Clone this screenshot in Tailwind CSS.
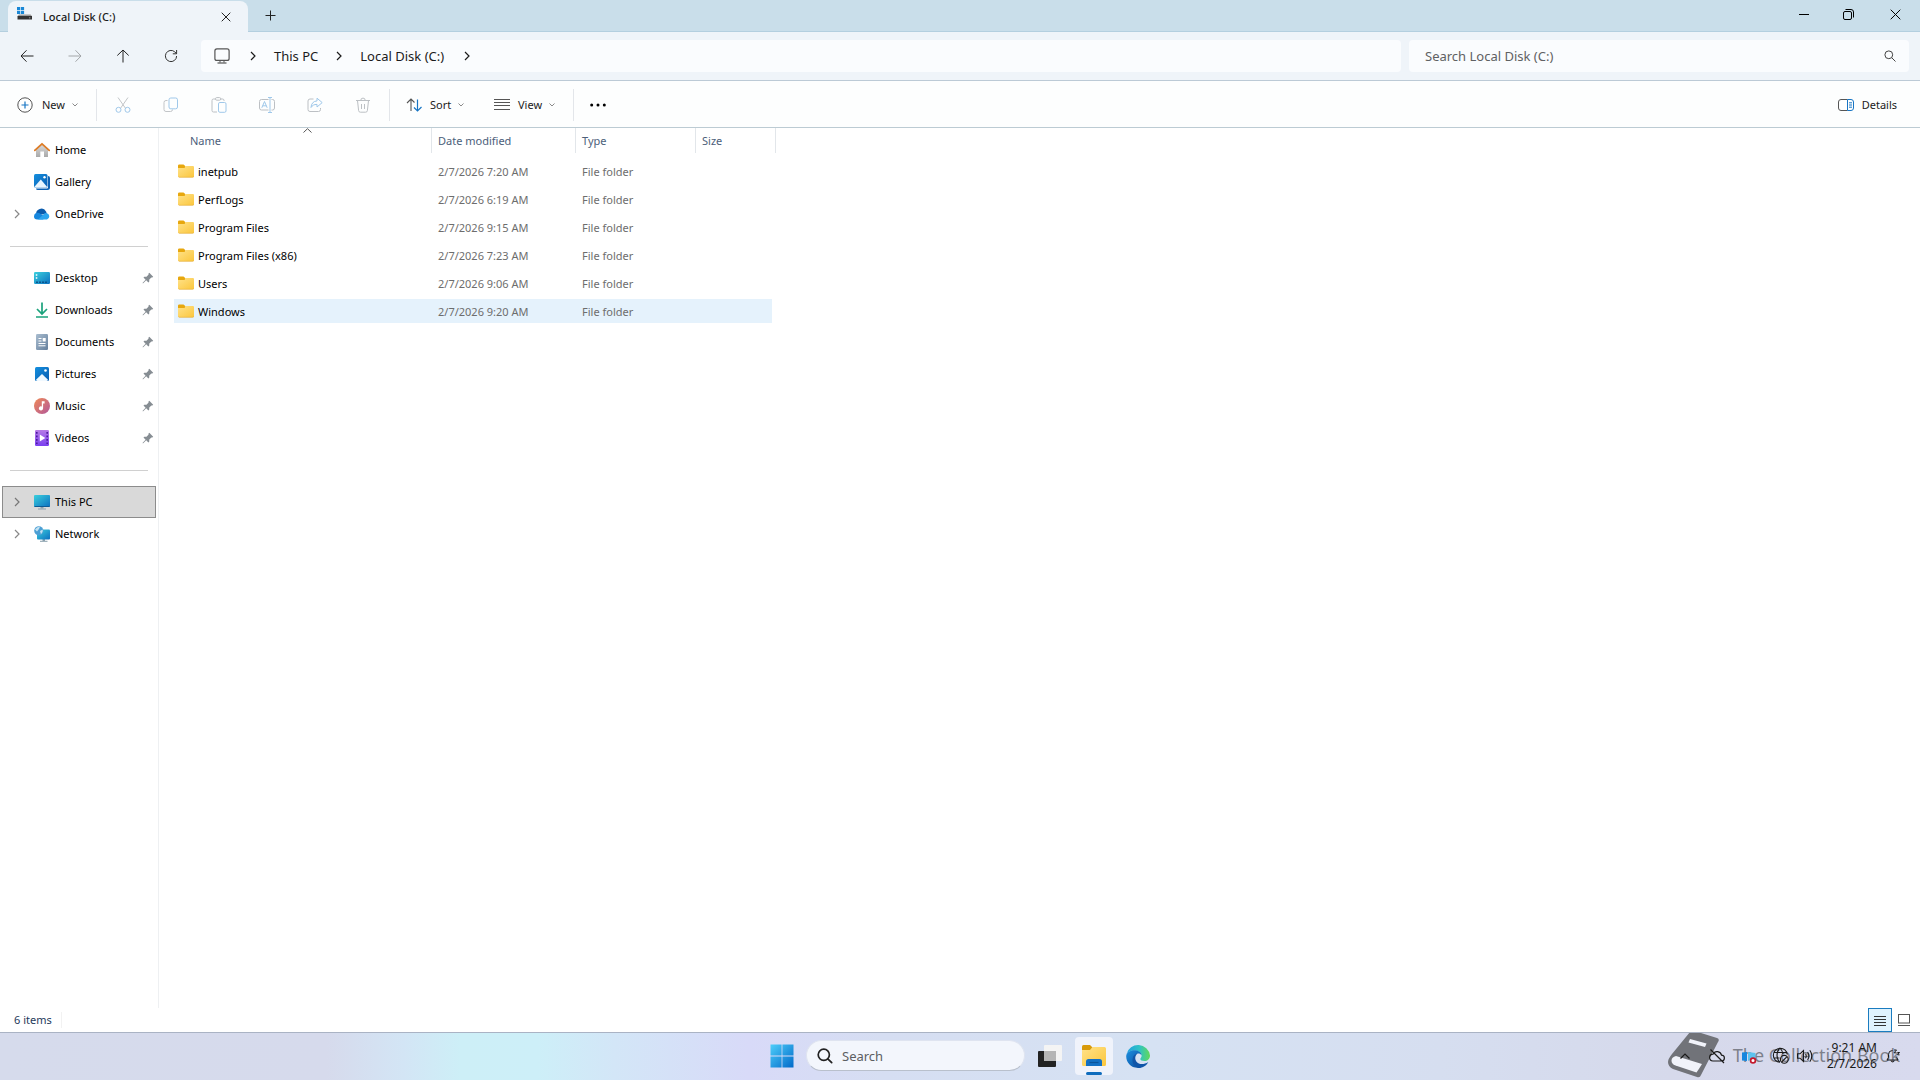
<!DOCTYPE html>
<html lang="en">
<head>
<meta charset="utf-8">
<title>Local Disk (C:)</title>
<script src="https://cdn.jsdelivr.net/npm/@tailwindcss/browser@4"></script>
</head>
<body class="flex h-screen flex-col overflow-hidden bg-white font-['Noto_Sans','Open_Sans',sans-serif] text-[11px] leading-4 text-[#1b1b1b]">

<svg class="absolute size-0" aria-hidden="true">
  <defs>
    <linearGradient id="gFolder" x1="0" y1="0" x2="1" y2="1"><stop offset="0" stop-color="#ffe28a"/><stop offset="1" stop-color="#fbc63c"/></linearGradient>
    <linearGradient id="gTeal" x1="0" y1="0" x2="1" y2="1"><stop offset="0" stop-color="#3bd0dd"/><stop offset="1" stop-color="#0b6fc0"/></linearGradient>
    <linearGradient id="gBlue" x1="0" y1="0" x2="1" y2="1"><stop offset="0" stop-color="#1490df"/><stop offset="1" stop-color="#0a5cb0"/></linearGradient>
    <linearGradient id="gWin" gradientUnits="userSpaceOnUse" x1="0" y1="0" x2="24" y2="24"><stop offset="0" stop-color="#4fd0fb"/><stop offset="1" stop-color="#0067c8"/></linearGradient>
    <linearGradient id="gHome" x1="0" y1="0" x2="0" y2="1"><stop offset="0" stop-color="#dcdcdc"/><stop offset="1" stop-color="#a9a9a9"/></linearGradient>
    <linearGradient id="gDoc" x1="0" y1="0" x2="1" y2="1"><stop offset="0" stop-color="#a9bdd0"/><stop offset="1" stop-color="#657f9c"/></linearGradient>
    <linearGradient id="gMusic" x1="0" y1="0" x2="1" y2="1"><stop offset="0" stop-color="#f08a55"/><stop offset="1" stop-color="#b2579b"/></linearGradient>
    <linearGradient id="gVideo" x1="0" y1="0" x2="0" y2="1"><stop offset="0" stop-color="#b77be6"/><stop offset="1" stop-color="#7a3ff0"/></linearGradient>
    <linearGradient id="gEdgeTop" x1="0" y1="0" x2="1" y2="0"><stop offset="0" stop-color="#1f9fe0"/><stop offset=".55" stop-color="#2fc3c4"/><stop offset="1" stop-color="#63d957"/></linearGradient>
    <linearGradient id="gEdgeLow" x1="0" y1="0" x2="1" y2="1"><stop offset="0" stop-color="#1b8fe0"/><stop offset="1" stop-color="#0b4a9c"/></linearGradient>
    <symbol id="folder" viewBox="0 0 16 14"><path d="M0 2C0 1 .5.5 1.300.5H5.500L7.500 2.200V5H0Z" fill="#e7a70e"/><path d="M0 4H6.500L8 2H14.700C15.500 2 16 2.500 16 3.300V12C16 12.800 15.500 13.300 14.700 13.300H1.300C.5 13.300 0 12.800 0 12Z" fill="url(#gFolder)"/><path d="M.4 12.600C.7 13.100 1 13.300 1.500 13.300H14.500C15.200 13.300 15.700 13 15.900 12.400" fill="none" stroke="#e2a62b" stroke-width=".6"/></symbol>
    <symbol id="pin" viewBox="0 0 12 12"><path d="M7.300.8 11.200 4.700 10.300 5.600 9.400 5.400 7.300 7.500 7.200 9.700 6.400 10.500 4.200 8.300 1.200 11.200.6 11.300.7 10.700 3.600 7.700 1.500 5.600 2.300 4.800 4.500 4.700 6.600 2.600 6.400 1.700Z" fill="#868d93"/></symbol>
    <symbol id="chev" viewBox="0 0 6 10"><path d="M1 1 5 5 1 9" fill="none" stroke="currentColor" stroke-width="1.200"/></symbol>
    <symbol id="down" viewBox="0 0 8 6"><path d="M1.500 1.500 4 4 6.500 1.500" fill="none" stroke="#8a8a8a"/></symbol>
  </defs>
</svg>

<!-- title bar with tabs -->
<header class="flex h-8 shrink-0 border-b border-[#b4cfdf] bg-[#c9deea] pl-2">
  <div class="-mb-px mt-px flex w-60 items-center rounded-t-lg bg-[#eff4f9] pl-2 pr-3">
    <svg class="mb-1 size-4" viewBox="0 0 16 16"><path d="M1 0H4.200V3.200H1ZM4.900 0H8.100V3.200H4.900ZM1 3.900H4.200V7.100H1ZM4.900 3.900H8.100V7.100H4.900Z" fill="#1987d6"/><path d="M3 7.600H14.600L16 9.300H1.500Z" fill="#9a9a9a"/><path d="M1.500 9H16V12.500H1.500Z" fill="#333"/><circle cx="13.800" cy="10.800" r=".6" fill="#bdbdbd"/></svg>
    <h1 class="ml-[11px] flex-1 font-medium">Local Disk (C:)</h1>
    <button aria-label="Close tab" class="grid size-5 place-items-center"><svg class="size-[10px]" viewBox="0 0 10 10"><path d="M.7.7 9.300 9.300M9.300.7.7 9.300" fill="none" stroke="#222"/></svg></button>
  </div>
  <button aria-label="New tab" class="grid w-11 place-items-center"><svg class="size-[11px]" viewBox="0 0 11 11"><path d="M5.500.5V10.500M.5 5.500H10.500" stroke="#222"/></svg></button>
  <div class="ml-auto mr-px flex h-7 text-black">
    <button aria-label="Minimize" class="grid w-[45px] place-items-center"><svg class="size-[10px]" viewBox="0 0 10 10"><path d="M0 5.500H10" stroke="currentColor"/></svg></button>
    <button aria-label="Restore" class="grid w-[45px] place-items-center"><svg class="size-[11px]" viewBox="0 0 11 11" fill="none" stroke="currentColor"><rect x=".5" y="2.500" width="8" height="8" rx="1.500"/><path d="M2.500.5H8A2.500 2.500 0 0 1 10.500 3V8.500"/></svg></button>
    <button aria-label="Close" class="grid w-12 place-items-center"><svg class="size-[11px]" viewBox="0 0 11 11"><path d="M.7.7 10.300 10.300M10.300.7.7 10.300" fill="none" stroke="currentColor"/></svg></button>
  </div>
</header>

<!-- navigation row -->
<div class="flex h-[49px] shrink-0 items-center gap-[6px] border-b border-[#bccad6] bg-[#eff4f9] pl-[3px] pr-[11px] text-[13px] leading-5">
  <nav class="flex">
    <button aria-label="Back" class="grid h-8 w-12 place-items-center"><svg class="size-[14px]" viewBox="0 0 14 14" fill="none" stroke="#222"><path d="M13.500 7H1M6.500 1.300 1 7 6.500 12.700"/></svg></button>
    <button aria-label="Forward" class="grid h-8 w-12 place-items-center"><svg class="size-[14px]" viewBox="0 0 14 14" fill="none" stroke="#a3a6a9"><path d="M.5 7H13M7.500 1.300 13 7 7.500 12.700"/></svg></button>
    <button aria-label="Up" class="grid h-8 w-12 place-items-center"><svg class="size-[14px]" viewBox="0 0 14 14" fill="none" stroke="#222"><path d="M7 13.500V1M1.300 6.500 7 1 12.700 6.500"/></svg></button>
    <button aria-label="Refresh" class="grid h-8 w-12 place-items-center"><svg class="size-[14px]" viewBox="0 0 14 14" fill="none" stroke="#333"><path d="M12.600 7A5.600 5.600 0 1 1 10.800 2.900L12.600 4.700M12.600 1V4.800H8.800"/></svg></button>
  </nav>
  <div class="grid flex-1 grid-cols-[12fr_5fr] gap-2">
    <div class="flex h-8 items-center rounded bg-[#fafcfe] pl-[13px]">
      <svg class="h-4 w-4" viewBox="0 0 16 16"><rect x=".9" y=".9" width="14.200" height="11.500" rx="2" fill="none" stroke="#555" stroke-width="1.200"/><path d="M6 12.500V14.500M10 12.500V14.500" stroke="#555"/><path d="M3.500 15H12.500" stroke="#555" stroke-width="1.200"/></svg>
      <svg class="ml-5 h-[10px] w-[6px]"><use href="#chev"/></svg>
      <a href="#" class="ml-[18px]">This PC</a>
      <svg class="ml-[18px] h-[10px] w-[6px]"><use href="#chev"/></svg>
      <a href="#" class="ml-[18px]">Local Disk (C:)</a>
      <svg class="ml-5 h-[10px] w-[6px]"><use href="#chev"/></svg>
    </div>
    <div class="flex h-8 items-center rounded bg-[#fafcfe] pl-4 pr-[13px]">
      <input aria-label="Search Local Disk (C:)" placeholder="Search Local Disk (C:)" class="min-w-0 flex-1 bg-transparent outline-none placeholder:text-[#5f6163]">
      <svg class="size-3" viewBox="0 0 12 12" fill="none" stroke="#444"><circle cx="4.800" cy="4.800" r="3.900"/><path d="M7.700 7.700 11.500 11.500"/></svg>
    </div>
  </div>
</div>

<!-- command bar -->
<div class="flex h-[47px] shrink-0 items-center border-b border-[#bccbd3] bg-[#fdfefe] pl-[17px] pt-[2px]">
  <button class="flex w-[79px] items-center">
    <svg class="size-4" viewBox="0 0 16 16" fill="none"><circle cx="8" cy="8" r="7.200" stroke="#555"/><path d="M8 4.500V11.500M4.500 8H11.500" stroke="#1775c4" stroke-width="1.200"/></svg>
    <span class="ml-[9px]">New</span><svg class="ml-[6px] h-[6px] w-2"><use href="#down"/></svg>
  </button>
  <span class="h-8 w-px bg-[#e3e6ea]"></span>
  <div class="ml-[2px] flex">
    <button disabled aria-label="Cut" class="grid h-8 w-12 place-items-center"><svg class="size-4" viewBox="0 0 16 16" fill="none"><path d="M3 .5 10.300 11M13 .5 5.700 11" stroke="#c2c5c8"/><circle cx="3.500" cy="12.800" r="2.500" stroke="#9fc8ea"/><circle cx="12.500" cy="12.800" r="2.500" stroke="#9fc8ea"/></svg></button>
    <button disabled aria-label="Copy" class="grid h-8 w-12 place-items-center"><svg class="size-4" viewBox="0 0 16 16" fill="none"><path d="M4.500 3.500H3A2 2 0 0 0 1 5.500V12.500A2 2 0 0 0 3 14.500H7.500A2 2 0 0 0 9.500 12.500" stroke="#c2c5c8"/><rect x="6" y="1" width="8.500" height="10.800" rx="1.800" stroke="#9fc8ea"/></svg></button>
    <button disabled aria-label="Paste" class="grid h-8 w-12 place-items-center"><svg class="size-4" viewBox="0 0 16 16" fill="none"><path d="M4.500 2H2.500A1.500 1.500 0 0 0 1 3.500V13.500A1.500 1.500 0 0 0 2.500 15H6M9.500 2H11.500A1.500 1.500 0 0 1 13 3.500V4" stroke="#bcc0c4"/><rect x="4.500" y=".6" width="5.200" height="2.600" rx="1.200" stroke="#bcc0c4"/><rect x="7.500" y="5.500" width="7.500" height="9.800" rx="1.400" stroke="#9fc8ea"/></svg></button>
    <button disabled aria-label="Rename" class="grid h-8 w-12 place-items-center"><svg class="size-4" viewBox="0 0 16 16" fill="none"><path d="M9.500 2.500H2.500A2 2 0 0 0 .5 4.500V11A2 2 0 0 0 2.500 13H9.500M12.500 2.500H13.500A2 2 0 0 1 15.500 4.500V11A2 2 0 0 1 13.500 13H12.500" stroke="#bcc0c4"/><path d="M11 .5V15.500M9 .5H13M9 15.500H13M2.800 10.800 5.500 4.500 8.200 10.800M3.700 8.800H7.300" stroke="#9fc8ea"/></svg></button>
    <button disabled aria-label="Share" class="grid h-8 w-12 place-items-center"><svg class="size-4" viewBox="0 0 16 16" fill="none"><path d="M6.500 2H3A2 2 0 0 0 1 4V12.500A2 2 0 0 0 3 14.500H11.500A2 2 0 0 0 13.500 12.500V11" stroke="#bcc0c4"/><path d="M10 1.200 15.200 5.600 10 10V7.400C7 7.300 5.300 8.400 4 10.500 4.300 6.500 6.300 4.200 10 3.900Z" stroke="#9fc8ea" stroke-linejoin="round"/></svg></button>
    <button disabled aria-label="Delete" class="grid h-8 w-12 place-items-center"><svg class="size-4" viewBox="0 0 16 16" fill="none" stroke="#bcc0c4"><path d="M1 3.500H15M5.800 3.300A2.200 2.200 0 0 1 10.200 3.300M2.500 3.700 3.600 13.500A1.800 1.800 0 0 0 5.400 15.200H10.600A1.800 1.800 0 0 0 12.400 13.500L13.500 3.700M6.500 7V12M9.500 7V12"/></svg></button>
  </div>
  <span class="ml-[2px] h-8 w-px bg-[#e3e6ea]"></span>
  <button class="ml-4 flex w-[88px] items-center">
    <svg class="size-4" viewBox="0 0 16 16" fill="none"><path d="M5 14V2M1 6 5 2 8.500 5.500" stroke="#555" stroke-width="1.100"/><path d="M11.500 2.500V14M8 10.500 11.500 14 15.500 10" stroke="#1775c4" stroke-width="1.200"/></svg>
    <span class="ml-2">Sort</span><svg class="ml-[6px] h-[6px] w-2"><use href="#down"/></svg>
  </button>
  <button class="flex w-[79px] items-center">
    <svg class="size-4" viewBox="0 0 16 16"><path d="M0 2.500H16M0 5.500H16M0 8.500H16M0 12.500H16" stroke="#555"/></svg>
    <span class="ml-2">View</span><svg class="ml-[6px] h-[6px] w-2"><use href="#down"/></svg>
  </button>
  <span class="h-8 w-px bg-[#e3e6ea]"></span>
  <button aria-label="See more" class="grid h-8 w-12 place-items-center"><svg class="h-1 w-4" viewBox="0 0 16 4"><circle cx="1.700" cy="2" r="1.500"/><circle cx="8" cy="2" r="1.500"/><circle cx="14.300" cy="2" r="1.500"/></svg></button>
  <button class="ml-auto mr-[23px] flex items-center">
    <svg class="size-4" viewBox="0 0 16 16" fill="none"><path d="M9.500 2.500H3A2.500 2.500 0 0 0 .5 5V11A2.500 2.500 0 0 0 3 13.500H9.500" stroke="#555"/><path d="M9.500 2.500H13A2.500 2.500 0 0 1 15.500 5V11A2.500 2.500 0 0 1 13 13.500H9.500ZM11 5.800H14M11 8H14M11 10.200H14" stroke="#1775c4"/></svg>
    <span class="ml-2">Details</span>
  </button>
</div>

<div class="flex min-h-0 flex-1">
  <!-- navigation pane -->
  <nav class="w-[159px] shrink-0 border-r border-[#eef0f2] pl-[2px] pr-[2px] pt-[6px] text-black">
    <a href="#" class="flex h-8 items-center pl-8"><svg class="mr-[5px] size-4" viewBox="0 0 16 16"><path d="M2 7 8 2 14 7V15H10V9.500H6.300V15H2Z" fill="url(#gHome)"/><path d="M.8 8.300 8 1.800 15.200 8.300" fill="none" stroke="#dd7c26" stroke-width="1.800" stroke-linecap="round" stroke-linejoin="round"/></svg>Home</a>
    <a href="#" class="flex h-8 items-center pl-8"><svg class="mr-[5px] size-4" viewBox="0 0 16 16"><path d="M14 2Q16 2 16 4V13.500Q16 16 13.500 16H4Q2 16 2 14.500H13Q14 14.500 14 13Z" fill="#0d62b4"/><rect width="13.500" height="13.500" rx="1.500" fill="url(#gBlue)"/><path d="M.5 12.800 6.800 5.500 13 12.800Q12.500 13.500 11.500 13.500H2Q1 13.500.5 12.800Z" fill="#e9f6ff"/><circle cx="10.500" cy="3.300" r="1.200" fill="#fff"/></svg>Gallery</a>
    <a href="#" class="flex h-8 items-center pl-3"><svg class="mr-[14px] h-[10px] w-[6px] text-[#888]"><use href="#chev"/></svg><svg class="mr-[5px] size-4" viewBox="0 0 16 16"><path d="M2.300 9A5.200 5.200 0 0 1 12 5.500L13 8Z" fill="#0b5cad"/><path d="M0 10.300A3.600 3.600 0 0 1 5 7L12 11 9 13.500H3.200A3.200 3.200 0 0 1 0 10.300Z" fill="#1687de"/><path d="M4 13.500 9.500 8.500Q11 6.500 13 7.200A3.300 3.300 0 0 1 13 13.500Z" fill="#2ba5ef"/></svg>OneDrive</a>
    <div class="flex h-8 items-center pl-2 pr-2"><hr class="flex-1 border-[#d0d0d0]"></div>
    <a href="#" class="flex h-8 items-center pl-8"><svg class="mr-[5px] size-4" viewBox="0 0 16 16"><rect y="2" width="16" height="12" rx="1.200" fill="url(#gTeal)"/><path d="M1.800 4.200H3.300V5.700H1.800ZM1.800 7.200H3.300V8.700H1.800Z" fill="#fff"/><path d="M2 12.300H14" stroke="#0a568f" stroke-width="1.400" stroke-dasharray="2 1"/></svg>Desktop<svg class="ml-auto mr-[2px] size-3"><use href="#pin"/></svg></a>
    <a href="#" class="flex h-8 items-center pl-8"><svg class="mr-[5px] size-4" viewBox="0 0 16 16" fill="none" stroke="#1ba27c" stroke-width="1.700"><path d="M8 .5V12M3 7 8 12 13 7M2 15H14"/></svg>Downloads<svg class="ml-auto mr-[2px] size-3"><use href="#pin"/></svg></a>
    <a href="#" class="flex h-8 items-center pl-8"><svg class="mr-[5px] size-4" viewBox="0 0 16 16"><rect x="2" width="12" height="16" rx="1.200" fill="url(#gDoc)"/><path d="M4.500 4.500H7.500M4.500 7H7.500M4.500 9.500H11.500M4.500 11.800H11.500" stroke="#fff"/><path d="M8.700 4H11.700V7.500H8.700Z" fill="#fff"/></svg>Documents<svg class="ml-auto mr-[2px] size-3"><use href="#pin"/></svg></a>
    <a href="#" class="flex h-8 items-center pl-8"><svg class="mr-[5px] size-4" viewBox="0 0 16 16"><rect x="1" y="1" width="14" height="14" rx="1.500" fill="url(#gBlue)"/><path d="M2 13.800 8 8 14 13.800Q13.700 15 12.500 15H3.500Q2.300 15 2 13.800Z" fill="#f1f9ff"/><circle cx="11.500" cy="4.500" r="1.300" fill="#fff"/></svg>Pictures<svg class="ml-auto mr-[2px] size-3"><use href="#pin"/></svg></a>
    <a href="#" class="flex h-8 items-center pl-8"><svg class="mr-[5px] size-4" viewBox="0 0 16 16"><circle cx="8" cy="8" r="8" fill="url(#gMusic)"/><path d="M7.800 3.300H10.600V5.600H9.100V10.300A2.100 2.100 0 1 1 7.800 8.400Z" fill="#fff"/></svg>Music<svg class="ml-auto mr-[2px] size-3"><use href="#pin"/></svg></a>
    <a href="#" class="flex h-8 items-center pl-8"><svg class="mr-[5px] size-4" viewBox="0 0 16 16"><rect x="1" width="14" height="16" rx="1.200" fill="url(#gVideo)"/><path d="M2.800 2V14M13.200 2V14" stroke="#4b1a9c" stroke-width="1.600" stroke-dasharray="1.800 1.700"/><path d="M5.800 4.500 11.300 8 5.800 11.500Z" fill="#fff"/></svg>Videos<svg class="ml-auto mr-[2px] size-3"><use href="#pin"/></svg></a>
    <div class="flex h-8 items-center pl-2 pr-2"><hr class="flex-1 border-[#d0d0d0]"></div>
    <a href="#" class="flex h-8 items-center border border-[#8c8c8c] bg-[#d9d9d9] pl-[11px]"><svg class="mr-[14px] h-[10px] w-[6px] text-[#777]"><use href="#chev"/></svg><svg class="mr-[5px] size-4" viewBox="0 0 16 16"><path d="M6.500 13H9.500V14.500H6.500Z" fill="#8aa0ad"/><path d="M4 15H12" stroke="#8aa0ad"/><rect y="1" width="16" height="12" rx="1" fill="url(#gTeal)"/><path d="M.5 12.500H15.500" stroke="#0d5a94"/></svg>This PC</a>
    <a href="#" class="flex h-8 items-center pl-3"><svg class="mr-[14px] h-[10px] w-[6px] text-[#888]"><use href="#chev"/></svg><svg class="mr-[5px] size-4" viewBox="0 0 16 16"><path d="M8.500 13H11V15H8.500Z" fill="#8aa0ad"/><path d="M6 15.300H13.500" stroke="#8aa0ad"/><rect x="3" y="3.500" width="13" height="10" rx="1" fill="url(#gTeal)"/><circle cx="4.800" cy="4.800" r="4.600" fill="#4c9fd4"/><path d="M1 3.500Q3.500 0 6 .8L5 3 3 5.500ZM6 5 8.800 3.500Q9.200 6 7 8.200Z" fill="#c4e2f2"/></svg>Network</a>
  </nav>

  <!-- file list -->
  <main class="min-w-0 flex-1 pl-[15px]">
    <table class="w-[602px] table-fixed border-separate border-spacing-0 text-left">
      <colgroup><col class="w-[258px]"><col class="w-36"><col class="w-[120px]"><col class="w-20"></colgroup>
      <thead class="text-[#4c607a]">
        <tr>
          <th class="relative p-0 pb-1 font-normal"><div class="h-[25px] border-r border-[#e2e6ea] pl-4 pt-[5px]">Name</div><svg class="absolute left-[129px] top-0 h-[5px] w-[9px]" viewBox="0 0 9 5"><path d="M.5 4.500 4.500.7 8.500 4.500" fill="none" stroke="#555"/></svg></th>
          <th class="p-0 pb-1 font-normal"><div class="h-[25px] border-r border-[#e2e6ea] pl-[6px] pt-[5px]">Date modified</div></th>
          <th class="p-0 pb-1 font-normal"><div class="h-[25px] border-r border-[#e2e6ea] pl-[6px] pt-[5px]">Type</div></th>
          <th class="p-0 pb-1 font-normal"><div class="h-[25px] border-r border-[#e2e6ea] pl-[6px] pt-[5px]">Size</div></th>
        </tr>
      </thead>
      <tbody class="text-[#6d6d6d]">
        <tr class="h-7"><td class="px-1 py-0 text-black"><div class="flex items-center gap-1"><svg class="h-[14px] w-4"><use href="#folder"/></svg><span class="pt-[2px]">inetpub</span></div></td><td class="pb-0 pl-[6px] pt-[2px]">2/7/2026 7:20 AM</td><td class="pb-0 pl-[6px] pt-[2px]">File folder</td><td></td></tr>
        <tr class="h-7"><td class="px-1 py-0 text-black"><div class="flex items-center gap-1"><svg class="h-[14px] w-4"><use href="#folder"/></svg><span class="pt-[2px]">PerfLogs</span></div></td><td class="pb-0 pl-[6px] pt-[2px]">2/7/2026 6:19 AM</td><td class="pb-0 pl-[6px] pt-[2px]">File folder</td><td></td></tr>
        <tr class="h-7"><td class="px-1 py-0 text-black"><div class="flex items-center gap-1"><svg class="h-[14px] w-4"><use href="#folder"/></svg><span class="pt-[2px]">Program Files</span></div></td><td class="pb-0 pl-[6px] pt-[2px]">2/7/2026 9:15 AM</td><td class="pb-0 pl-[6px] pt-[2px]">File folder</td><td></td></tr>
        <tr class="h-7"><td class="px-1 py-0 text-black"><div class="flex items-center gap-1"><svg class="h-[14px] w-4"><use href="#folder"/></svg><span class="pt-[2px]">Program Files (x86)</span></div></td><td class="pb-0 pl-[6px] pt-[2px]">2/7/2026 7:23 AM</td><td class="pb-0 pl-[6px] pt-[2px]">File folder</td><td></td></tr>
        <tr class="h-7"><td class="px-1 py-0 text-black"><div class="flex items-center gap-1"><svg class="h-[14px] w-4"><use href="#folder"/></svg><span class="pt-[2px]">Users</span></div></td><td class="pb-0 pl-[6px] pt-[2px]">2/7/2026 9:06 AM</td><td class="pb-0 pl-[6px] pt-[2px]">File folder</td><td></td></tr>
        <tr class="h-7"><td class="border-y-2 border-transparent bg-[#e5f2fc] bg-clip-padding px-1 py-0 text-black"><div class="flex items-center gap-1"><svg class="h-[14px] w-4"><use href="#folder"/></svg><span class="pt-[2px]">Windows</span></div></td><td class="border-y-2 border-transparent bg-[#e5f2fc] bg-clip-padding pb-0 pl-[6px] pt-[2px]">2/7/2026 9:20 AM</td><td class="border-y-2 border-transparent bg-[#e5f2fc] bg-clip-padding pb-0 pl-[6px] pt-[2px]">File folder</td><td class="border-y-2 border-r-4 border-transparent bg-[#e5f2fc] bg-clip-padding p-0"></td></tr>
      </tbody>
    </table>
  </main>
</div>

<!-- status bar -->
<div class="flex h-6 shrink-0 items-center pl-[14px] pr-[10px] text-[#1e395b]">
  <span class="border-r border-[#f2f2f2] pr-[9px]">6 items</span>
  <button aria-label="Details view" class="ml-auto grid size-6 place-items-center border border-[#1a7cc0] bg-[#dff2fd]"><svg class="mt-[2px] h-3 w-3" viewBox="0 0 12 12"><path d="M0 1.500H12M0 4.500H12M0 7.500H12M0 10.500H12" stroke="#333"/></svg></button>
  <button aria-label="Large icons view" class="ml-[6px]"><svg class="h-3 w-3" viewBox="0 0 12 12" fill="none" stroke="#555"><rect x=".5" y=".5" width="11" height="8.500"/><path d="M0 11.500H12"/></svg></button>
</div>

<!-- taskbar -->
<footer class="relative grid h-12 shrink-0 grid-cols-[1fr_auto_1fr] items-center border-t border-[#aab3c4] bg-[linear-gradient(90deg,#d6dbec_0%,#d6daec_17%,#d3e5f5_21%,#cdeff7_24%,#cdeff8_28%,#d3e6f7_32%,#d8daf8_39%,#d6def2_46%,#d6e2f3_60%,#d6def0_75%,#d6d9eb_87%,#d8daee_100%)] pb-[2px]">
  <!-- watermark behind the tray -->
  <div class="pointer-events-none absolute right-5 top-0 flex h-full items-center gap-[14px] overflow-hidden pb-1 text-[18px] leading-6 text-[#55585f]/70">
    <svg class="h-[47px] w-[51px]" viewBox="0 0 51 47"><path d="M22 1Q23-1 25-.5L49 7Q52 8 50 11L33 44Q32 47 29 46L5 38Q0 35.500 0 31 0 28 4 23Z" fill="#717379"/><path d="M8 25Q3.500 26 3.500 29.500 3.500 33 7.500 34.500L28.500 41.500Q31 38 34 33Z" fill="#f1f3fa"/><path d="M22 8 38.500 12.500 37 16 20.500 11.500Z" fill="#f1f3fa"/></svg>
    <span class="whitespace-nowrap">The Collection Book</span>
  </div>
  <div></div>
  <div class="flex items-center">
    <button aria-label="Start" class="grid h-11 w-11 place-items-center"><svg class="size-6" viewBox="0 0 24 24"><path d="M.5.5H11.600V11.600H.5ZM12.400.5H23.500V11.600H12.400ZM.5 12.400H11.600V23.500H.5ZM12.400 12.400H23.500V23.500H12.400Z" fill="url(#gWin)"/></svg></button>
    <label class="ml-[2px] mr-[3px] flex h-[31px] w-[219px] items-center rounded-full border border-[#dfe4f0] border-b-[#b9c0cc] bg-[#f3f6fc] pl-[10px]">
      <svg class="size-4" viewBox="0 0 16 16" fill="none" stroke="#222" stroke-width="1.700"><circle cx="6.800" cy="6.800" r="5.600"/><path d="M10.800 10.800 14.700 14.700" stroke-linecap="round"/></svg>
      <input aria-label="Search" placeholder="Search" class="ml-[9px] w-40 bg-transparent text-[13px] outline-none placeholder:text-[#5c5e62]">
    </label>
    <button aria-label="Task view" class="grid h-11 w-11 place-items-center"><svg class="size-6" viewBox="0 0 24 24"><rect x="0" y="7" width="18" height="16" rx="1" fill="#222"/><rect x="6" y="1" width="18" height="16" rx="1" fill="#f4f4f4"/><path d="M6 7H18V17H6Z" fill="#b5b5b5"/></svg></button>
    <button aria-label="File Explorer" class="relative mx-[3px] grid h-[38px] w-[38px] place-items-center rounded bg-[#f0f3fb]"><svg class="size-6" viewBox="0 0 24 24"><path d="M0 2.500Q0 1 1.500 1H8L10.500 3.500V8H0Z" fill="#d89a0a"/><path d="M0 6H8L10.500 3H22.500Q24 3 24 4.500V20.500Q24 22 22.500 22H1.500Q0 22 0 20.500Z" fill="url(#gFolder)"/><path d="M4 22V17.500Q4 15 6.500 15H17.500Q20 15 20 17.500V22Z" fill="#1370c4"/><path d="M7.500 18.500H16.500" stroke="#0a549b" stroke-width="1.200"/></svg><span class="absolute bottom-0 left-[11px] h-[3px] w-4 rounded-full bg-[#0f6cbd]"></span></button>
    <button aria-label="Edge" class="grid h-11 w-11 place-items-center"><svg class="size-6" viewBox="0 0 24 24"><path d="M.5 10A12 12 0 0 1 24 11.500C24 15 21.500 17 18.500 17 15.800 17 14.300 16 14.300 15 14.300 14.300 15.600 13.600 15.600 11.800 15.600 8.500 12 6.500 8.500 6.500 4.500 6.500 1.700 8 .5 10Z" fill="url(#gEdgeTop)"/><path d="M.2 12.500C.2 8.500 4 6.300 8.500 6.300 12 6.300 15.300 8.300 15.600 11.300 14.500 9.600 13 9.200 11.800 9.500 8.500 10.500 7 14 8.300 17.500 9.300 20.500 12 22.800 15 23.500 6 25.500.2 19 .2 12.500Z" fill="url(#gEdgeLow)"/><path d="M11.500 9.600C9 11.500 8.500 15 10.500 17.700 13 20.800 18 20.800 22.300 18 20.500 21.500 17 24 12.500 24 8.500 23 6.300 19.500 6.500 15.500 6.700 12 9 10 11.500 9.600Z" fill="#0f55a8"/></svg></button>
  </div>
  <div class="relative flex items-center justify-end pr-5 text-[#1a1a1a]">
    <svg class="h-[6px] w-[10px]" viewBox="0 0 10 6"><path d="M.5 5.500 5 1 9.500 5.500" fill="none" stroke="currentColor" stroke-width="1.200"/></svg>
    <svg class="ml-[19px] size-4" viewBox="0 0 16 16" fill="none" stroke="currentColor" stroke-width="1.200"><path d="M4 13H12.500A2.800 2.800 0 0 0 12.500 7.200 4.500 4.500 0 0 0 4 6.200 3.400 3.400 0 0 0 4 13ZM1.500 1.500 15 15"/></svg>
    <svg class="ml-4 size-4" viewBox="0 0 16 16"><path d="M1 4.500 6 4V13L1 12.500Z" fill="#1687de"/><path d="M7 4 14.500 5V10L7 13Z" fill="#5cc3ee"/><circle cx="12" cy="12.500" r="2.400" fill="#fff" stroke="#c4182c" stroke-width="1.700"/></svg>
    <svg class="ml-[15px] size-[17px]" viewBox="0 0 17 17" fill="none" stroke="currentColor" stroke-width="1.100"><path d="M15.300 7.500A7 7 0 1 0 8 15.200M1.500 5.500H14.500M1.500 11H7.500M8 1.200Q5 4 5 8.200T8 15.200M8 1.200Q10.500 3.500 11 7"/><circle cx="12.300" cy="12.300" r="3.900"/><path d="M9.700 15 15 9.700"/></svg>
    <svg class="ml-2 size-4" viewBox="0 0 16 16" fill="none" stroke="currentColor" stroke-width="1.100"><path d="M.6 5.800H3L6.500 2.500V13.500L3 10.200H.6ZM8.500 5.800Q10 8 8.500 10.200M10.600 4Q13.300 8 10.600 12M12.800 2.300Q16.800 8 12.800 13.700"/></svg>
    <time class="ml-[14px] text-right text-xs leading-4" datetime="2026-02-07T09:21"><span class="block">9:21 AM</span><span class="block">2/7/2026</span></time>
    <svg class="ml-[9px] size-[14px]" viewBox="0 0 14 14" fill="none" stroke="currentColor"><path d="M6.500 1.500A4 4 0 0 0 2.500 5.500V8.500L1 11H12L10.800 8.500V7.500M5 11.300A1.600 1.600 0 0 0 8.200 11.300M8 1H10.500L8 3.800H10.500M11.500 3.500H13.500L11.500 5.800H13.500"/></svg>
  </div>
</footer>
</body>
</html>
